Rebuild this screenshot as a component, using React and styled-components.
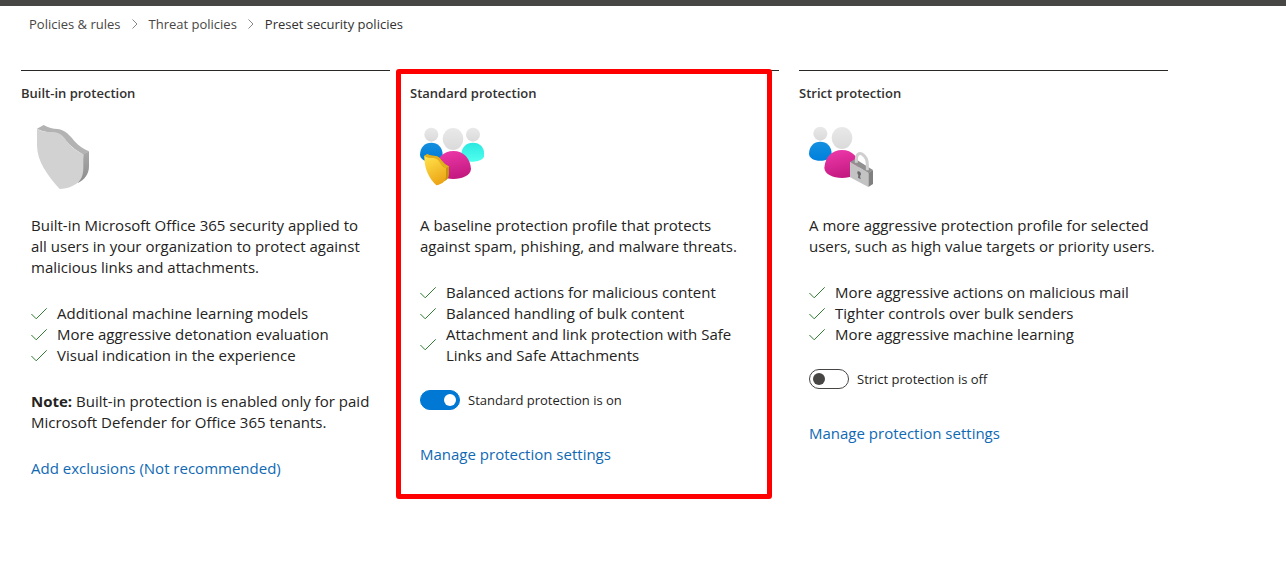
import React, { useState } from 'react'
import styled, { createGlobalStyle } from 'styled-components'

const GlobalStyle = createGlobalStyle`
* {
  box-sizing: border-box;
}
body {
  margin: 0;
  background: #ffffff;
  color: #242322;
  font-family: "Open Sans", "Noto Sans", sans-serif;
  font-size: 15px;
  line-height: 21px;
}
`

const TopBar = styled.header`
height: 6px;
background: #484644;
`

const Breadcrumb = styled.nav`
padding: 8px 29px;
ol {
  display: flex;
  flex-wrap: wrap;
  align-items: center;
  margin: 0;
  padding: 0;
  list-style: none;
}
li {
  display: flex;
  align-items: center;
  font-size: 13px;
  line-height: 20px;
}
svg {
  margin: 0 10px;
}
`

const Crumb = styled.a`
color: ${props => props.$current ? '#323130' : '#484644'};
text-decoration: none;
`

const Columns = styled.main`
display: grid;
grid-template-columns: repeat(3, minmax(0, 1fr));
column-gap: 20px;
padding: 28px 118px 40px 21px;
`

const Column = styled.section`
position: relative;
border-top: 1px solid #292827;
padding-top: 12px;
`

const Highlight = styled.div`
position: absolute;
top: -2px;
right: 7px;
bottom: -20px;
left: -14px;
border: 5px solid #ff0000;
border-radius: 3px;
pointer-events: none;
`

const Title = styled.h2`
margin: 0;
font-size: 13px;
line-height: 20px;
font-weight: 600;
color: #323130;
`

const Body = styled.div`
padding: 22px 10px 0;
`

const Picture = styled.svg`
display: block;
width: 64px;
height: 64px;
margin-bottom: 26px;
`

const Text = styled.p`
margin: 25px 0;
`

const Features = styled.ul`
margin: 0 0 24px;
padding: 0;
list-style: none;
`

const Feature = styled.li`
display: flex;
align-items: center;
gap: 10px;
svg {
  flex: none;
}
`

const ToggleRow = styled.div`
display: flex;
align-items: center;
gap: 8px;
margin-bottom: 34px;
label {
  font-size: 13px;
  line-height: 20px;
}
`

const Switch = styled.input`
appearance: none;
display: flex;
align-items: center;
flex: none;
width: 40px;
height: 20px;
margin: 0;
padding: 0 3px;
border: 1px solid #484644;
border-radius: 10px;
background: #ffffff;
cursor: pointer;
&::before {
  content: "";
  width: 12px;
  height: 12px;
  border-radius: 50%;
  background: #484644;
}
&:checked {
  justify-content: flex-end;
  border-color: #0078d4;
  background: #0078d4;
}
&:checked::before {
  background: #ffffff;
}
`

const Link = styled.a`
color: #0f69b4;
text-decoration: none;
&:hover {
  text-decoration: underline;
}
`

const Chevron = () => (
    <svg width="8" height="12" viewBox="0 0 8 12" fill="none" stroke="#8a8886" aria-hidden="true">
        <path d="M1.5 1.5 6 6 1.5 10.5" />
    </svg>
)

const Check = () => (
    <svg width="16" height="16" viewBox="0 0 16 16" fill="none" stroke="#2f7d32" aria-hidden="true">
        <path d="M.4 8 5.2 12.8 15.7 2.3" />
    </svg>
)

const ShieldPicture = () => (
    <Picture viewBox="30 45 192 192" aria-hidden="true">
        <defs>
            <linearGradient id="shieldSide" x1="0" y1="0" x2="0" y2="1">
                <stop offset="0" stopColor="#a9a9a9" />
                <stop offset="1" stopColor="#8c8c8c" />
            </linearGradient>
        </defs>
        <path fill="#b3b3b3" d="M48 56 68 45 C82 54 96 56 110 57 C132 59 148 78 160 93 C174 108 188 117 204 124 L187 134 C160 118 145 105 131 88 C116 66 94 69 80 66 C66 64 57 60 48 56Z" />
        <path fill="url(#shieldSide)" d="M187 133 204 124 V169 C204 193 190 210 170 219 L183 190Z" />
        <path fill="#d2d2d2" d="M48 56 C61 64 73 67 90 66 C113 64 125 75 137 93 C149 112 169 124 187 133 V174 C187 204 174 220 154 228 C140 235 128 237 116 237 C78 195 48 153 48 106Z" />
    </Picture>
)

const StandardPicture = () => (
    <Picture viewBox="45 45 192 192" aria-hidden="true">
        <defs>
            <linearGradient id="stdHead" x1="0" y1="0" x2="0" y2="1">
                <stop offset="0" stopColor="#e9e9e9" />
                <stop offset="1" stopColor="#dadada" />
            </linearGradient>
            <linearGradient id="stdBlue" x1="0" y1="0" x2="0" y2="1">
                <stop offset="0" stopColor="#1490df" />
                <stop offset="1" stopColor="#0078d4" />
            </linearGradient>
            <linearGradient id="stdCyan" x1="0" y1="0" x2="0" y2="1">
                <stop offset="0" stopColor="#2ae8e0" />
                <stop offset="1" stopColor="#50ffee" />
            </linearGradient>
            <linearGradient id="stdPink" x1="0.3" y1="0" x2="0.6" y2="1">
                <stop offset="0" stopColor="#ec38a9" />
                <stop offset="1" stopColor="#c2187e" />
            </linearGradient>
            <linearGradient id="stdGold" x1="0.2" y1="0" x2="0.6" y2="1">
                <stop offset="0" stopColor="#ffe14a" />
                <stop offset="1" stopColor="#eca415" />
            </linearGradient>
        </defs>
        <circle cx="79" cy="74" r="21" fill="url(#stdHead)" />
        <circle cx="204" cy="74" r="21" fill="url(#stdHead)" />
        <path fill="url(#stdBlue)" d="M45 134 C45 112 60 98 79 98 S113 112 113 134 C113 147 98 155 79 155 S45 147 45 134Z" />
        <path fill="url(#stdCyan)" d="M169 134 C169 112 184 98 204 98 S238 112 238 134 C238 147 223 155 204 155 S169 147 169 134Z" />
        <ellipse cx="144" cy="87" rx="33" ry="35" fill="#ffffff" />
        <ellipse cx="144" cy="87" rx="31" ry="33" fill="url(#stdHead)" />
        <path fill="url(#stdPink)" d="M92 177 C94 143 116 123 145 123 C176 123 196 146 198 177 C197 196 172 207 145 207 S93 196 92 177Z" />
        <path fill="#c89311" d="M58 137 67 132 C75 138 82 137 92 138 C108 140 112 163 132 169 V193 C132 203 127 210 118 214 L58 145Z" />
        <path fill="#e1b01c" d="M58 137 67 132 C75 138 82 137 92 138 C108 140 112 163 132 169 L123 175 L90 150Z" />
        <path fill="url(#stdGold)" d="M58 137 C67 144 75 144 85 144 C104 145 103 166 123 175 V199 C122 216 108 224 94 226 C74 206 57 179 58 137Z" />
    </Picture>
)

const StrictPicture = () => (
    <Picture viewBox="42 45 192 192" aria-hidden="true">
        <defs>
            <linearGradient id="strHead" x1="0" y1="0" x2="0" y2="1">
                <stop offset="0" stopColor="#e9e9e9" />
                <stop offset="1" stopColor="#dadada" />
            </linearGradient>
            <linearGradient id="strBlue" x1="0" y1="0" x2="0" y2="1">
                <stop offset="0" stopColor="#1490df" />
                <stop offset="1" stopColor="#0080dc" />
            </linearGradient>
            <linearGradient id="strPink" x1="0.3" y1="0" x2="0.6" y2="1">
                <stop offset="0" stopColor="#ec38a9" />
                <stop offset="1" stopColor="#c2187e" />
            </linearGradient>
        </defs>
        <circle cx="76" cy="71" r="21" fill="url(#strHead)" />
        <path fill="url(#strBlue)" d="M42 131 C42 109 57 95 76 95 S110 109 110 131 C110 144 95 152 76 152 S42 144 42 131Z" />
        <ellipse cx="141" cy="84" rx="33" ry="35" fill="#ffffff" />
        <ellipse cx="141" cy="84" rx="31" ry="33" fill="url(#strHead)" />
        <path fill="url(#strPink)" d="M88 174 C90 140 112 120 141 120 C172 120 192 143 194 174 C193 193 168 204 141 204 S89 193 88 174Z" />
        <path fill="#909090" d="M166 155 181 147 234 180 220 190Z" />
        <path fill="none" stroke="#cfcfcf" strokeWidth="9" d="M184 158 V148 C185 130 194 128 201 132 C212 139 217 149 217 163 V181" />
        <path fill="#808080" d="M220 189 234 180 V222 L220 231Z" />
        <path fill="#c3c3c3" d="M165 155 220 188 V231 L165 202Z" />
        <path fill="#6a6a6a" d="M187 188 C187 180 198 185 198 193 C198 196 196 197 195 197 L197 208 189 203 190 195 C188 193 187 191 187 188Z" />
    </Picture>
)

const FeatureList = ({ items }) => (
    <Features>
        {items.map(item => (
            <Feature key={item}>
                <Check />
                <span>{item}</span>
            </Feature>
        ))}
    </Features>
)

const ProtectionToggle = ({ id, name, initial }) => {
    const [on, setOn] = useState(initial)
    return (
        <ToggleRow>
            <Switch type="checkbox" role="switch" id={id} checked={on} onChange={() => setOn(!on)} />
            <label htmlFor={id}>{name} is {on ? 'on' : 'off'}</label>
        </ToggleRow>
    )
}

export default function App() {
    return (
        <>
            <GlobalStyle />
            <TopBar />
            <Breadcrumb aria-label="Breadcrumb">
                <ol>
                    <li><Crumb href="#policies">Policies &amp; rules</Crumb><Chevron /></li>
                    <li><Crumb href="#threat">Threat policies</Crumb><Chevron /></li>
                    <li><Crumb href="#preset" $current aria-current="page">Preset security policies</Crumb></li>
                </ol>
            </Breadcrumb>
            <Columns>
                <Column>
                    <Title>Built-in protection</Title>
                    <Body>
                        <ShieldPicture />
                        <Text>Built-in Microsoft Office 365 security applied to<br />all users in your organization to protect against malicious links and attachments.</Text>
                        <FeatureList items={[
                            'Additional machine learning models',
                            'More aggressive detonation evaluation',
                            'Visual indication in the experience'
                        ]} />
                        <Text><b>Note:</b> Built-in protection is enabled only for paid Microsoft Defender for Office 365 tenants.</Text>
                        <Link href="#exclusions">Add exclusions (Not recommended)</Link>
                    </Body>
                </Column>
                <Column>
                    <Title>Standard protection</Title>
                    <Body>
                        <StandardPicture />
                        <Text>A baseline protection profile that protects<br />against spam, phishing, and malware threats.</Text>
                        <FeatureList items={[
                            'Balanced actions for malicious content',
                            'Balanced handling of bulk content',
                            'Attachment and link protection with Safe Links and Safe Attachments'
                        ]} />
                        <ProtectionToggle id="standard" name="Standard protection" initial={true} />
                        <Link href="#standard-settings">Manage protection settings</Link>
                    </Body>
                    <Highlight />
                </Column>
                <Column>
                    <Title>Strict protection</Title>
                    <Body>
                        <StrictPicture />
                        <Text>A more aggressive protection profile for selected users, such as high value targets or priority users.</Text>
                        <FeatureList items={[
                            'More aggressive actions on malicious mail',
                            'Tighter controls over bulk senders',
                            'More aggressive machine learning'
                        ]} />
                        <ProtectionToggle id="strict" name="Strict protection" initial={false} />
                        <Link href="#strict-settings">Manage protection settings</Link>
                    </Body>
                </Column>
            </Columns>
        </>
    )
}
